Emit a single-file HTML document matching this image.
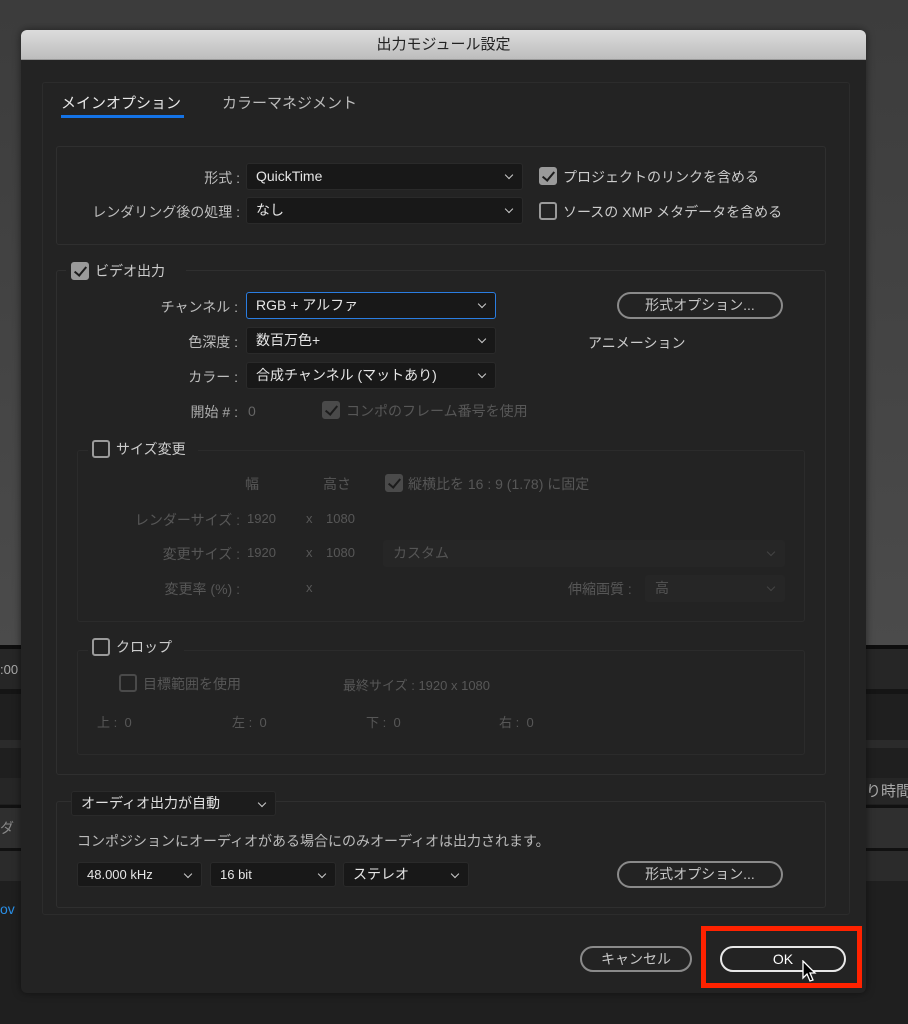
<!DOCTYPE html>
<html><head><meta charset="utf-8"><style>
*{box-sizing:border-box;margin:0;padding:0}
body{width:908px;height:1024px;overflow:hidden;position:relative;background:#1f1f1f;font-family:"Liberation Sans","Noto Sans CJK JP",sans-serif;font-size:14px;color:#bdbdbd}
.a{position:absolute;white-space:nowrap}
.band{position:absolute;left:0;width:908px}
.box{position:absolute;border:1px solid #2f2f2f;border-radius:3px}
.dd{position:absolute;background:#181818;border:1px solid #2a2a2a;border-radius:3px;color:#e6e6e6;padding-left:9px;line-height:25px;font-size:14px}
.dd:after{content:"";position:absolute;right:10px;top:8px;width:5px;height:5px;border-right:1.5px solid #ccc;border-bottom:1.5px solid #ccc;transform:rotate(45deg)}
.dd.dis{background:#262626;border-color:#262626;color:#555}
.dd.dis:after{border-color:#444}
.cb{position:absolute;width:18px;height:18px;border:2px solid #9a9a9a;border-radius:3px}
.cb.on{background:#9a9a9a}
.cb.on:after{content:"";position:absolute;left:4px;top:0px;width:5px;height:10px;border-right:2.5px solid #1c1c1c;border-bottom:2.5px solid #1c1c1c;transform:rotate(40deg)}
.cb.dis{border-color:#4a4a4a}
.cb.dis.on{background:#4a4a4a}
.btn{position:absolute;border:2px solid #8a8a8a;border-radius:14px;text-align:center;color:#c8c8c8;font-size:14px}
.r{text-align:right}
.d{color:#575757}
</style></head><body>
<div class="band" style="top:0;height:645px;background:linear-gradient(#3c3c3c,#4b4b4b)"></div>
<div class="band" style="top:645px;height:4px;background:#0e0e0e"></div>
<div class="band" style="top:649px;height:40px;background:#262626"></div>
<div class="band" style="top:689px;height:5px;background:#151515"></div>
<div class="band" style="top:740px;height:8px;background:#2b2b2b"></div>
<div class="band" style="top:778px;height:26px;background:#262626"></div>
<div class="band" style="top:805px;height:3px;background:#111"></div>
<div class="band" style="top:808px;height:40px;background:#2f2f2f"></div>
<div class="band" style="top:848px;height:3px;background:#111"></div>
<div class="band" style="top:851px;height:30px;background:#2b2b2b"></div>
<div class="a" style="left:0;top:662px;font-size:13px;color:#aaa">:00</div>
<div class="a" style="left:0;top:818px;font-size:14px;color:#888">ダ</div>
<div class="a" style="left:0;top:901px;font-size:14px;color:#2a8fe6">ov</div>
<div class="a" style="left:866px;top:780px;font-size:15px;color:#aaa">り時間</div>

<div style="position:absolute;left:21px;top:30px;width:845px;height:963px;background:#232323;border-radius:6px;overflow:hidden;box-shadow:0 0 8px rgba(0,0,0,.5)">
<div style="height:30px;background:linear-gradient(#dcdcdc,#bdbdbd);border-bottom:1px solid #999;text-align:center;line-height:30px;color:#222;font-size:15px">出力モジュール設定</div>
</div>

<div class="box" style="left:42px;top:82px;width:808px;height:833px;border-color:#2c2c2c"></div>
<div class="a" style="left:61px;top:92px;color:#e8e8e8;font-size:15px">メインオプション</div>
<div class="a" style="left:61px;top:115px;width:123px;height:3px;background:#1473e6"></div>
<div class="a" style="left:222px;top:92px;color:#bbb;font-size:15px">カラーマネジメント</div>

<div class="box" style="left:56px;top:146px;width:770px;height:99px"></div>
<div class="a r" style="left:60px;width:180px;top:168px">形式 :</div>
<div class="dd" style="left:246px;top:163px;width:277px;height:27px">QuickTime</div>
<div class="a r" style="left:60px;width:180px;top:202px">レンダリング後の処理 :</div>
<div class="dd" style="left:246px;top:197px;width:277px;height:27px">なし</div>
<div class="cb on" style="left:539px;top:167px"></div>
<div class="a" style="left:563px;top:167px;color:#ccc">プロジェクトのリンクを含める</div>
<div class="cb" style="left:539px;top:202px"></div>
<div class="a" style="left:563px;top:202px;color:#ccc">ソースの XMP メタデータを含める</div>

<div class="box" style="left:56px;top:270px;width:770px;height:505px"></div>
<div class="a" style="left:66px;top:260px;width:120px;height:22px;background:#232323"></div>
<div class="cb on" style="left:71px;top:262px"></div>
<div class="a" style="left:95px;top:261px;color:#ccc">ビデオ出力</div>
<div class="a r" style="left:60px;width:178px;top:297px">チャンネル :</div>
<div class="dd" style="left:246px;top:292px;width:250px;height:27px;border-color:#2a7de1">RGB + アルファ</div>
<div class="a r" style="left:60px;width:178px;top:332px">色深度 :</div>
<div class="dd" style="left:246px;top:327px;width:250px;height:27px">数百万色+</div>
<div class="a r" style="left:60px;width:178px;top:367px">カラー :</div>
<div class="dd" style="left:246px;top:362px;width:250px;height:27px">合成チャンネル (マットあり)</div>
<div class="btn" style="left:617px;top:292px;width:166px;height:27px;line-height:23px">形式オプション...</div>
<div class="a" style="left:588px;top:333px;color:#ccc">アニメーション</div>
<div class="a r" style="left:60px;width:178px;top:402px;color:#aaa">開始 # :</div>
<div class="a d" style="left:248px;top:403px;color:#666">0</div>
<div class="cb dis on" style="left:322px;top:401px"></div>
<div class="a d" style="left:346px;top:401px">コンポのフレーム番号を使用</div>

<div class="box" style="left:77px;top:450px;width:728px;height:172px;border-color:#2b2b2b"></div>
<div class="a" style="left:88px;top:438px;width:110px;height:22px;background:#232323"></div>
<div class="cb" style="left:92px;top:440px"></div>
<div class="a" style="left:116px;top:439px;color:#ccc">サイズ変更</div>
<div class="a d" style="left:245px;top:474px">幅</div>
<div class="a d" style="left:323px;top:474px">高さ</div>
<div class="cb dis on" style="left:385px;top:474px"></div>
<div class="a d" style="left:408px;top:474px">縦横比を 16 : 9 (1.78) に固定</div>
<div class="a d r" style="left:60px;width:180px;top:510px">レンダーサイズ :</div>
<div class="a d" style="left:247px;top:511px;font-size:13px">1920</div>
<div class="a d" style="left:306px;top:511px;font-size:13px">x</div>
<div class="a d" style="left:326px;top:511px;font-size:13px">1080</div>
<div class="a d r" style="left:60px;width:180px;top:544px">変更サイズ :</div>
<div class="a d" style="left:247px;top:545px;font-size:13px">1920</div>
<div class="a d" style="left:306px;top:545px;font-size:13px">x</div>
<div class="a d" style="left:326px;top:545px;font-size:13px">1080</div>
<div class="dd dis" style="left:383px;top:540px;width:402px;height:27px">カスタム</div>
<div class="a d r" style="left:60px;width:180px;top:579px">変更率 (%) :</div>
<div class="a d" style="left:306px;top:580px;font-size:13px">x</div>
<div class="a d" style="left:568px;top:579px">伸縮画質 :</div>
<div class="dd dis" style="left:645px;top:575px;width:140px;height:27px">高</div>

<div class="box" style="left:77px;top:650px;width:728px;height:105px;border-color:#2b2b2b"></div>
<div class="a" style="left:88px;top:637px;width:96px;height:22px;background:#232323"></div>
<div class="cb" style="left:92px;top:638px"></div>
<div class="a" style="left:116px;top:637px;color:#ccc">クロップ</div>
<div class="cb dis" style="left:119px;top:674px"></div>
<div class="a d" style="left:143px;top:674px">目標範囲を使用</div>
<div class="a d" style="left:343px;top:675px;font-size:13px">最終サイズ : 1920 x 1080</div>
<div class="a d" style="left:97px;top:712px;font-size:13px">上 :&nbsp; 0</div>
<div class="a d" style="left:232px;top:712px;font-size:13px">左 :&nbsp; 0</div>
<div class="a d" style="left:366px;top:712px;font-size:13px">下 :&nbsp; 0</div>
<div class="a d" style="left:499px;top:712px;font-size:13px">右 :&nbsp; 0</div>

<div class="box" style="left:56px;top:801px;width:770px;height:107px"></div>
<div class="dd" style="left:71px;top:791px;width:205px;height:25px;background:#1c1c1c;line-height:23px;color:#e0e0e0">オーディオ出力が自動</div>
<div class="a" style="left:77px;top:831px;color:#bbb">コンポジションにオーディオがある場合にのみオーディオは出力されます。</div>
<div class="dd" style="left:77px;top:862px;width:125px;height:25px;line-height:23px;font-size:13px">48.000 kHz</div>
<div class="dd" style="left:210px;top:862px;width:126px;height:25px;line-height:23px;font-size:13px">16 bit</div>
<div class="dd" style="left:343px;top:862px;width:126px;height:25px;line-height:23px">ステレオ</div>
<div class="btn" style="left:617px;top:861px;width:166px;height:27px;line-height:23px">形式オプション...</div>

<div class="btn" style="left:580px;top:946px;width:112px;height:26px;line-height:22px">キャンセル</div>
<div class="a" style="left:701px;top:926px;width:161px;height:62px;border:5px solid #ff2200"></div>
<div class="btn" style="left:720px;top:946px;width:126px;height:26px;line-height:22px;border-color:#e8e8e8;color:#fff">OK</div>
<svg class="a" style="left:802px;top:960px" width="16" height="24" viewBox="0 0 16 24"><path d="M1 1 L1 18 L5 14 L8 21 L11 20 L8 13 L13 13 Z" fill="#000" stroke="#fff" stroke-width="1.3"/></svg>
</body></html>
